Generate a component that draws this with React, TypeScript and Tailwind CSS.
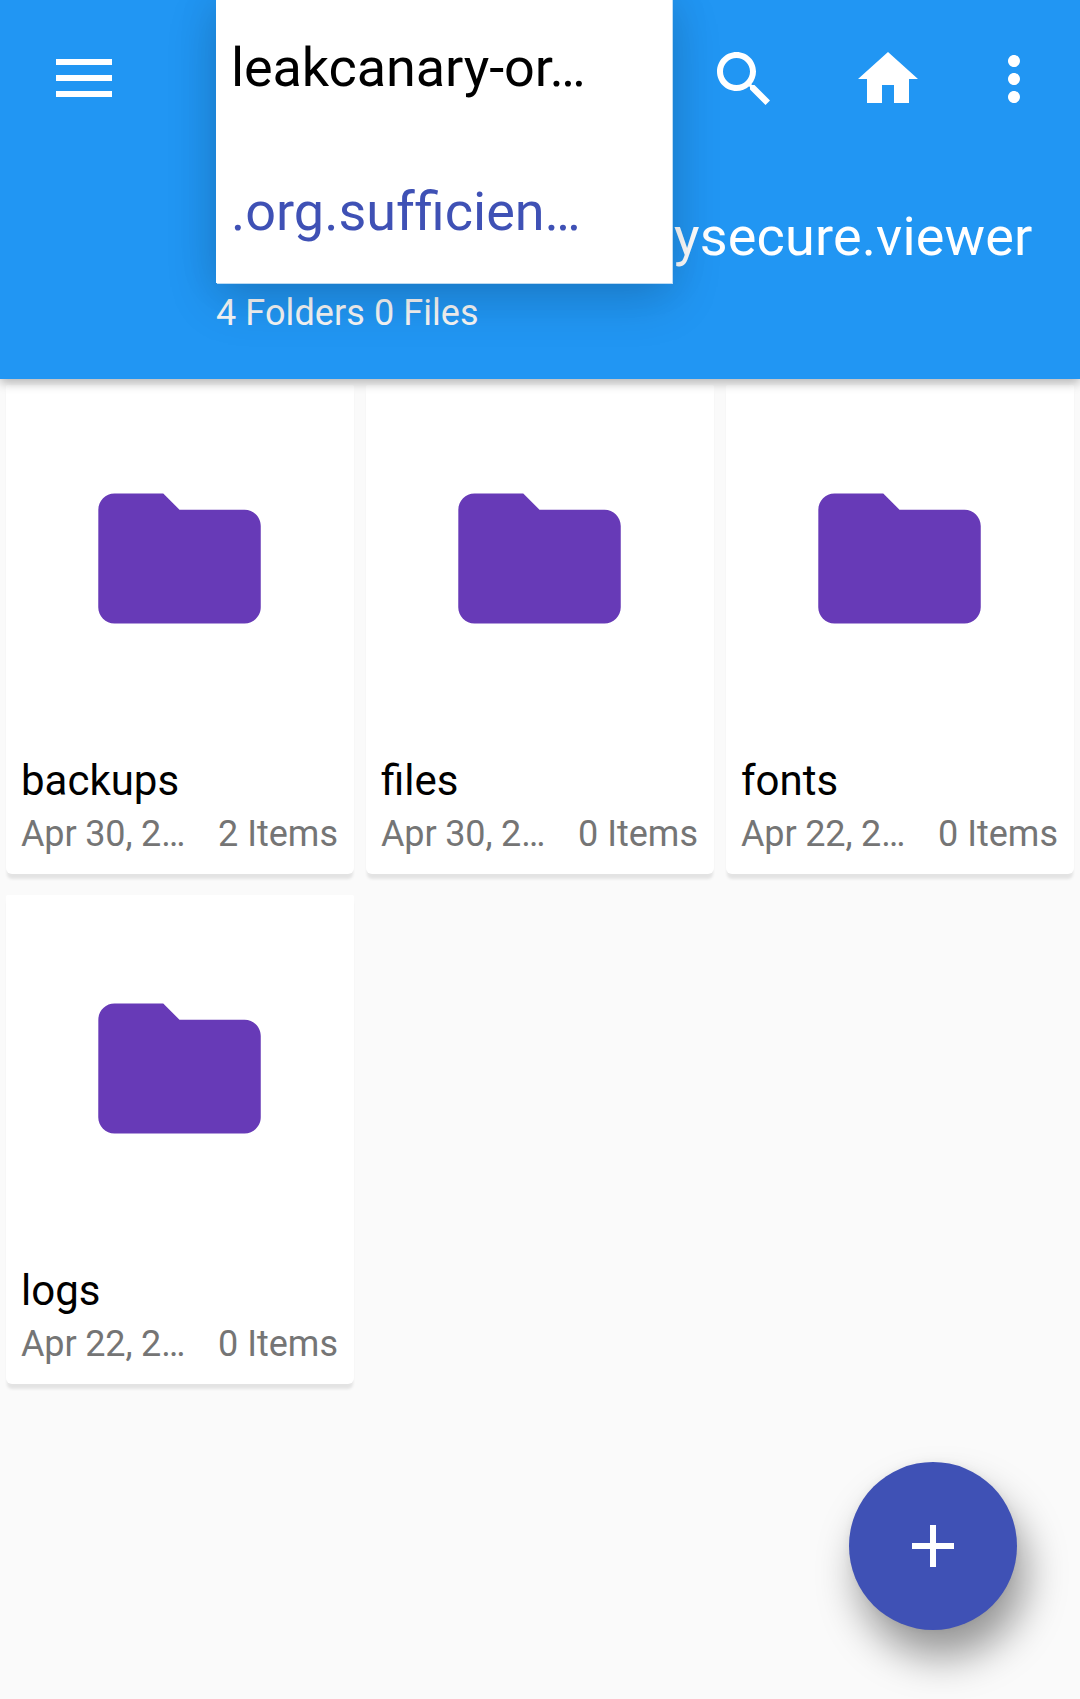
import React from 'react';

type Folder = { name: string; date: string; items: string };

const folders: Folder[] = [
  { name: 'backups', date: 'Apr 30, 2…', items: '2 Items' },
  { name: 'files', date: 'Apr 30, 2…', items: '0 Items' },
  { name: 'fonts', date: 'Apr 22, 2…', items: '0 Items' },
  { name: 'logs', date: 'Apr 22, 2…', items: '0 Items' },
];

function Icon({ d, className }: { d: string; className: string }) {
  return (
    <svg viewBox="0 0 24 24" fill="currentColor" className={className} aria-hidden="true">
      <path d={d} />
    </svg>
  );
}

const SEARCH =
  'M15.5 14h-.79l-.28-.27C15.41 12.59 16 11.11 16 9.5 16 5.91 13.09 3 9.5 3S3 5.91 3 9.5 5.91 16 9.5 16c1.61 0 3.09-.59 4.23-1.57l.27.28v.79l5.17 5.14L20.66 19.15l-5.16-5.15zm-6 0C7.01 14 5 11.99 5 9.5S7.01 5 9.5 5 14 7.01 14 9.5 11.99 14 9.5 14z';
const HOME = 'M10 20v-6h4v6h5v-8h3L12 3 2 12h3v8z';
const MORE =
  'M12 8c1.1 0 2-.9 2-2s-.9-2-2-2-2 .9-2 2 .9 2 2 2zm0 2c-1.1 0-2 .9-2 2s.9 2 2 2 2-.9 2-2-.9-2-2-2zm0 6c-1.1 0-2 .9-2 2s.9 2 2 2 2-.9 2-2-.9-2-2-2z';
const FOLDER = 'M10 4H4c-1.1 0-1.99.9-1.99 2L2 18c0 1.1.9 2 2 2h16c1.1 0 2-.9 2-2V8c0-1.1-.9-2-2-2h-8l-2-2z';

function PathMenu() {
  return (
    <div className="absolute -top-1 left-[216px] w-[456px] bg-white text-[54px] leading-[144px] whitespace-nowrap shadow-[1px_1px_0_rgba(255,255,255,0.7),0_16px_48px_rgba(0,0,0,0.16),0_0_40px_rgba(0,0,0,0.08)]">
      <div className="h-36 pl-[15px] tracking-[-0.1px] text-black">leakcanary-or…</div>
      {/* The zero-width non-joiner keeps "ffi" as f + fi instead of a triple ligature. */}
      <div className="h-[143px] pl-[15px] text-[#3f51b5]">{'.org.suf\u200cficien…'}</div>
    </div>
  );
}

function Header() {
  return (
    <header className="relative z-10 h-[379px] bg-[#2196f3] text-white shadow-[0_4px_10px_rgba(0,0,0,0.28)]">
      <div className="flex h-[158px] items-center justify-between pr-[30px] pl-14">
        <button className="mb-0.5 flex w-14 flex-col gap-2.5" aria-label="Menu">
          <span className="h-1.5 w-full bg-white" />
          <span className="h-1.5 w-full bg-white" />
          <span className="h-1.5 w-full bg-white" />
        </button>
        <div className="flex items-center">
          <Icon d={SEARCH} className="mr-[72px] size-[72px]" />
          <Icon d={HOME} className="mr-[54px] size-[72px]" />
          <Icon d={MORE} className="size-[72px]" />
        </div>
      </div>
      <div className="pt-[47px] pl-[216px]">
        <h1 className="pl-[458px] text-[54px] leading-[64px] tracking-[0.17px] whitespace-nowrap">ysecure.viewer</h1>
        <p className="mt-[22px] text-[36px] leading-[44px] tracking-[0.08px] text-[#f5f5f5]">4 Folders 0 Files</p>
      </div>
      <PathMenu />
    </header>
  );
}

function FolderCard({ folder }: { folder: Folder }) {
  return (
    <article className="h-[489px] rounded-t-xs rounded-b-md bg-white shadow-[0_6px_3px_-1px_rgba(0,0,0,0.09)]">
      <div className="flex h-[347px] w-[347px] items-center justify-center">
        <Icon d={FOLDER} className="size-[195px] text-[#673ab7]" />
      </div>
      <div className="pt-6 pr-4 pl-[15px]">
        <h2 className="text-[42px] leading-[50px] text-black">{folder.name}</h2>
        <div className="mt-1.5 flex justify-between text-[36px] leading-[44px] whitespace-nowrap text-[#757575]">
          <span className="tracking-[-0.15px]">{folder.date}</span>
          <span>{folder.items}</span>
        </div>
      </div>
    </article>
  );
}

export default function App() {
  return (
    <div className="relative h-[1699px] w-[1080px] overflow-hidden bg-[#fafafa] font-['Roboto',sans-serif]">
      <Header />
      <main className="grid grid-cols-3 gap-x-3 gap-y-[21px] px-1.5 pt-1.5">
        {folders.map((f) => (
          <FolderCard key={f.name} folder={f} />
        ))}
      </main>
      <button
        aria-label="Add"
        className="absolute top-[1462px] left-[849px] flex size-[168px] items-center justify-center rounded-full bg-[#3f51b5] text-white shadow-[9px_27px_40px_0_rgba(0,0,0,0.4),0_0_8px_rgba(0,0,0,0.05)]"
      >
        <Icon d="M19 13h-6v6h-2v-6H5v-2h6V5h2v6h6v2z" className="size-[72px]" />
      </button>
    </div>
  );
}
